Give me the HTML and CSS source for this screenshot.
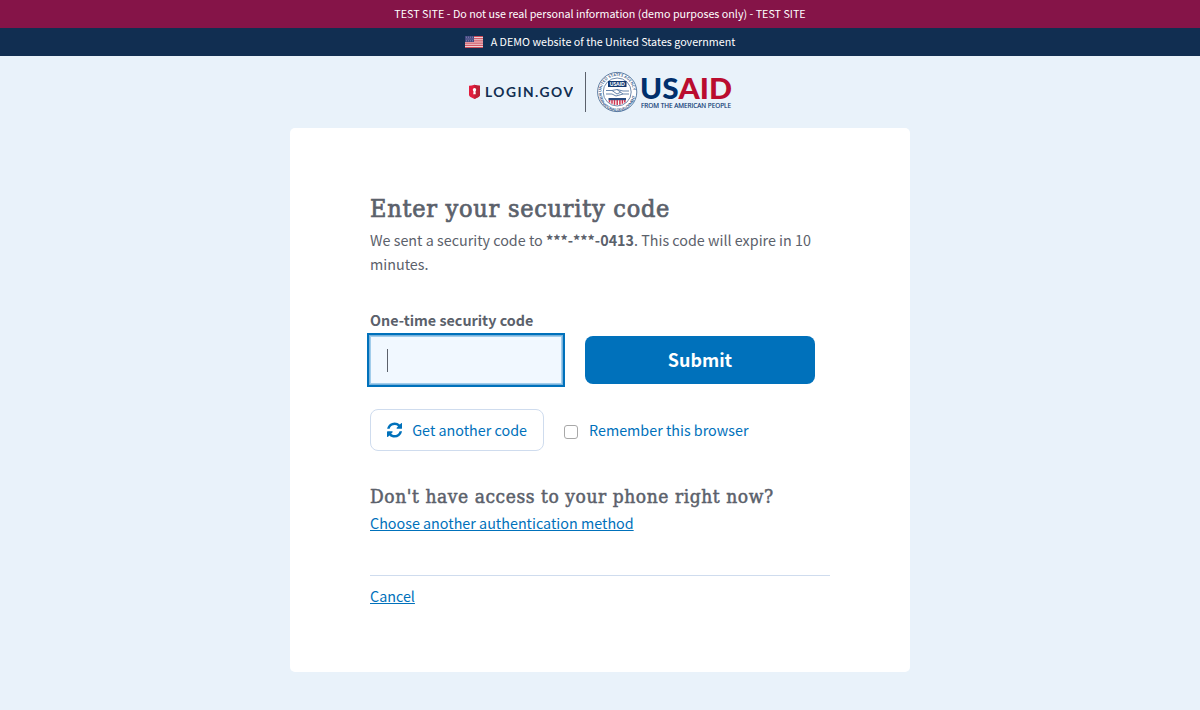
FILE: index.html
```html
<!DOCTYPE html>
<html lang="en">
<head>
<meta charset="utf-8">
<title>Enter your security code</title>
<link rel="stylesheet" href="styles.css">
</head>
<body>
<div class="banner banner-test"><span>TEST SITE - Do not use real personal information (demo purposes only) - TEST SITE</span></div>
<div class="banner banner-gov">
  <svg class="flag" width="18" height="12" viewBox="0 0 18 12">
    <rect width="18" height="12" fill="#f2dfe3"/>
    <path d="M0 .5h18M0 2.4h18M0 4.2h18M0 6h18M0 7.8h18M0 9.6h18M0 11.5h18" stroke="#cd4a59" stroke-width="1"/>
    <rect width="9" height="6" fill="#42467f"/>
    <path d="M1 1.2h7M1.5 3h7M1 4.8h7" stroke="#9a9cc0" stroke-width=".8" stroke-dasharray="1 1"/>
  </svg>
  <span>A DEMO website of the United States government</span>
</div>
<header class="logos">
  <svg class="login-logo" width="105" height="20" viewBox="0 0 105 20">
    <path d="M1 3.7q2.700 0 5.500-.9 2.700.9 5.500.9v9q0 1.500-1.500 2.200L6.500 16.900 2.500 14.900Q1 14.200 1 12.700z" fill="#e21d3e"/>
    <path d="M6.500 2.800q2.700.9 5.500.9v9q0 1.500-1.500 2.200L6.500 16.900z" fill="#bd1f35"/>
    <circle cx="6.500" cy="7.800" r="1.700" fill="#fff"/><path d="M5.700 8h1.600l.5 4.200H5.200z" fill="#fff"/>
    <text class="login-word" x="17" y="14.500" textLength="88">LOGIN.GOV</text>
  </svg>
  <div class="divider"></div>
  <svg class="usaid-logo" width="136" height="40" viewBox="0 0 136 40">
    <defs>
      <path id="ring-top" d="M4.300 20a15.900 15.900 0 0 1 31.800 0"/>
      <path id="ring-bottom" d="M1.900 21a18.300 18.300 0 0 0 36.600 0"/>
    </defs>
    <circle cx="20.200" cy="20" r="19.600" fill="#fff" stroke="#365d8c" stroke-width=".8"/>
    <circle cx="20.200" cy="20" r="14" fill="#fff" stroke="#4b6c98" stroke-width=".8"/>
    <text class="seal-text"><textPath href="#ring-top" textLength="48">UNITED STATES AGENCY</textPath></text>
    <text class="seal-text"><textPath href="#ring-bottom" textLength="54">INTERNATIONAL DEVELOPMENT</textPath></text>
    <rect x="11" y="9" width="18.500" height="6" fill="#123a72"/>
    <text class="seal-name" x="12.800" y="13.900" textLength="15">USAID</text>
    <path d="M9 18.500h6l5-1 6 1.500h6M9 22h6l4 2 7-2h6M15 18.500l5 3.500 4-2M20 17.500l6 4.500" fill="none" stroke="#6786ad" stroke-width="1"/>
    <rect x="11.500" y="26" width="17.500" height="2.300" fill="#284b80"/>
    <path d="M12.500 28v2.500M15 28v3.800M17.500 28v4.800M20.200 28v5M22.900 28v4.800M25.400 28v3.800M27.800 28v2.500" stroke="#cd3550" stroke-width="1.500"/>
    <text class="usaid-word" x="43" y="26.700" textLength="38.500" lengthAdjust="spacingAndGlyphs" fill="#002f6c">US</text>
    <text class="usaid-word" x="81.500" y="26.700" textLength="53.500" lengthAdjust="spacingAndGlyphs" fill="#ba0c2f">AID</text>
    <text class="usaid-tag" x="44" y="35.500" textLength="90" lengthAdjust="spacingAndGlyphs">FROM THE AMERICAN PEOPLE</text>
  </svg>
</header>
<main class="card">
  <h1>Enter your security code</h1>
  <p class="intro">We sent a security code to <strong>***-***-0413</strong>. This code will expire in 10 minutes.</p>
  <div class="label">One-time security code</div>
  <div class="code-row">
    <div class="code-input"><span class="caret"></span></div>
    <button class="submit">Submit</button>
  </div>
  <div class="options">
    <button class="resend">
      <svg width="16" height="16" viewBox="0 0 1536 1536" fill="#0071bb"><path d="M1511 928q0 5-1 7-64 268-268 434.500T764 1536q-146 0-282.500-55T238 1324l-129 129q-19 19-45 19t-45-19-19-45V960q0-26 19-45t45-19h448q26 0 45 19t19 45-19 45l-137 137q71 66 161 102t187 36q134 0 250-65t186-179q11-17 53-117 8-23 30-23h192q13 0 22.500 9.500t9.500 22.500zm25-800v448q0 26-19 45t-45 19h-448q-26 0-45-19t-19-45 19-45l138-138Q969 256 768 256q-134 0-250 65T332 500q-11 17-53 117-8 23-30 23H50q-13 0-22.500-9.500T18 608v-7q65-268 270-434.500T768 0q146 0 284 55.500T1297 212l130-129q19-19 45-19t45 19 19 45z"/></svg>
      <span>Get another code</span>
    </button>
    <label class="remember"><span class="box"></span><span>Remember this browser</span></label>
  </div>
  <h2>Don't have access to your phone right now?</h2>
  <a class="link" href="#">Choose another authentication method</a>
  <div class="footer"><a class="link" href="#">Cancel</a></div>
</main>
</body>
</html>
```
FILE: styles.css
```css
* { box-sizing: border-box; }
body {
  margin: 0;
  height: 710px;
  background: #e9f2fa;
  color: #5b616b;
  font: 14.33px/24px "Noto Sans CJK SC", sans-serif;
}
.banner {
  height: 28px;
  display: flex;
  align-items: center;
  justify-content: center;
  color: #fff;
  font-size: 10.74px;
  line-height: 28px;
}
.banner-test { background: #851448; }
.banner-gov { background: #112e51; gap: 8px; }
.logos {
  height: 72px;
  display: flex;
  align-items: center;
  justify-content: center;
}
.divider { width: 1px; height: 40px; margin: 0 11px 0 12px; background: #5b616b; }
.login-word { font: 700 13.8px Lato, sans-serif; fill: #112e51; }
.usaid-word { font: 900 28px Lato, sans-serif; }
.usaid-tag { font: 400 6.6px "Open Sans", sans-serif; fill: #002f6c; stroke: #002f6c; stroke-width: .15px; }
.usaid-logo { overflow: visible; }
.seal-text { font: 700 3.8px Lato, sans-serif; fill: #2a4f83; }
.seal-name { font: 900 5px Lato, sans-serif; fill: #fff; }
.card {
  width: 620px;
  height: 544px;
  margin: 0 auto;
  padding: 65px 80px 64px;
  border-radius: 5px;
  background: #fff;
}
h1, h2 { margin: 0; font-family: "DejaVu Serif Condensed", "DejaVu Serif", serif; font-weight: 400; white-space: nowrap; -webkit-text-stroke: .7px #5b616b; }
h1 { font-size: 25px; line-height: 32px; letter-spacing: .74px; }
h2 { margin-top: 33px; font-size: 19px; line-height: 24px; letter-spacing: .57px; -webkit-text-stroke-width: .5px; }
.intro { margin: 3px 0 32px; }
.label { height: 28px; font-weight: 700; }
.code-row { display: flex; gap: 23px; }
.code-input {
  width: 192px;
  height: 48px;
  padding: 12px 16px;
  border: 1px solid #a2cdeb;
  box-shadow: 0 0 0 1px #78b2dc, 0 0 0 3px #0071bb;
  background: #f1f8ff;
}
.caret { display: block; width: 1px; height: 23px; background: #5b616b; }
.submit {
  width: 230px;
  height: 48px;
  padding: 0 0 2px;
  border: 0;
  border-radius: 8px;
  background: #0071bb;
  color: #fff;
  font: 700 17.9px/46px "Noto Sans CJK SC", sans-serif;
}
.options { display: flex; align-items: center; gap: 20px; margin-top: 25px; color: #0071bb; }
.resend {
  width: 174px;
  height: 42px;
  padding: 0 16px;
  display: flex;
  align-items: center;
  gap: 10px;
  border: 1px solid #cfdcee;
  border-radius: 8px;
  background: #fff;
  color: inherit;
  font: inherit;
  white-space: nowrap;
}
.remember { display: flex; align-items: center; gap: 11px; }
.box { width: 14px; height: 14px; margin-top: 3px; border: 1px solid #a8a8a8; border-radius: 3px; background: #fff; }
.link { color: #0071bb; text-decoration: underline; text-underline-offset: 1px; }
h2 + .link { display: block; margin-top: 3px; }
.footer { margin-top: 40px; padding-top: 8px; border-top: 1px solid #cfdcee; }
```
